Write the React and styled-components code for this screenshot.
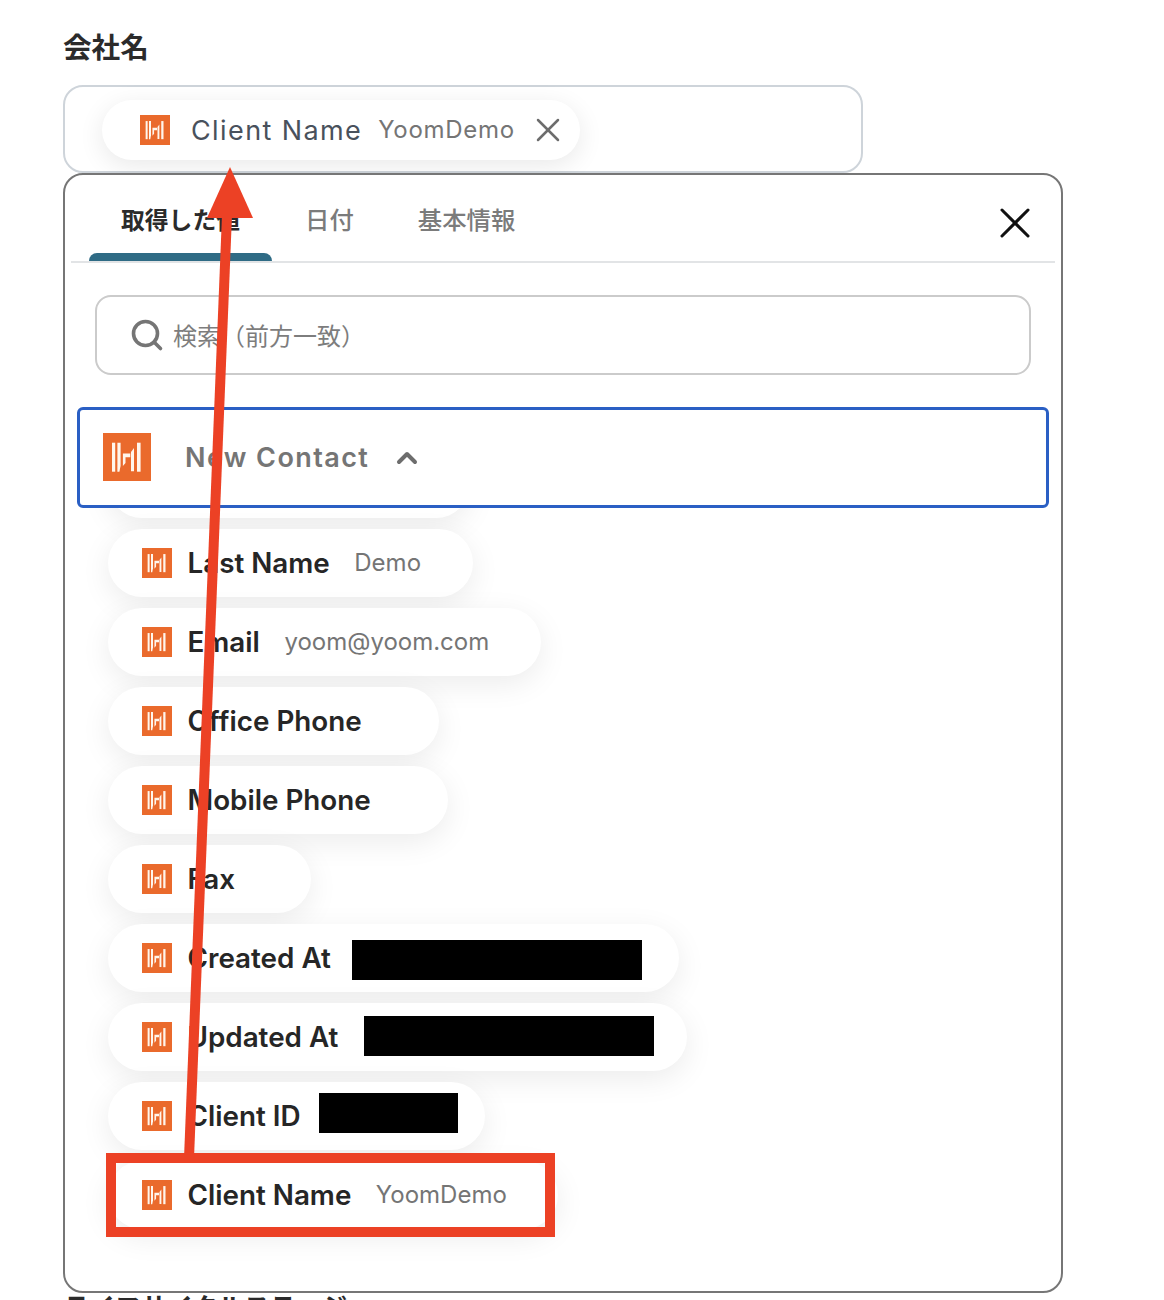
import React from "react";
import styled, { createGlobalStyle } from "styled-components";
import { ChevronUp, Search, X } from "lucide-react";

const Global = createGlobalStyle`
  html, body { margin: 0; padding: 0; height: 1300px; overflow: hidden; background: #fff; }
  * { box-sizing: border-box; }
  body { font-family: Inter, "Noto Sans CJK JP", sans-serif; color: #2b2b2b; }
`;

const Page = styled.div`
  position: relative;
  width: 1164px;
  height: 1300px;
  overflow: hidden;
  padding: 29px 0 0 63px;
`;
const FieldLabel = styled.div`
  font-family: Inter, "Noto Sans CJK JP", sans-serif;
  font-size: 28.6px;
  line-height: 38px;
  font-weight: 600;
  color: #2b2b2b;
`;
const ValueField = styled.div`
  width: 800px;
  height: 88px;
  margin-top: 18px;
  border: 2px solid #ced4da;
  border-radius: 20px;
  padding: 13px 0 0 37px;
`;
const SelectedPill = styled.div`
  display: flex;
  align-items: center;
  width: 478px;
  height: 60px;
  padding-left: 38px;
  border-radius: 30px;
  background: #fff;
  box-shadow: 0 6px 26px rgba(0, 0, 0, 0.09);
`;
const SelectedName = styled.span`
  margin-left: 21px;
  font-size: 27px;
  letter-spacing: 1.4px;
  color: #49515c;
`;
const SelectedValue = styled.span`
  margin: 0 0 2px 16px;
  font-size: 24px;
  letter-spacing: 0.7px;
  color: #757575;
`;
const RemoveIcon = styled(X)`
  flex: none;
  margin: 0 0 0 13px;
  color: #6d6d6d;
`;
const Panel = styled.div`
  width: 1000px;
  height: 1120px;
  border: 2px solid #767676;
  border-radius: 20px;
  background: #fff;
`;
const TabBar = styled.div`
  display: flex;
  align-items: stretch;
  height: 88px;
  margin: 0 6px 0 6px;
  padding: 0 14px 0 18px;
  border-bottom: 2px solid #e2e4e6;
`;
const Tab = styled.div`
  position: relative;
  display: flex;
  align-items: center;
  justify-content: center;
  flex: none;
  width: ${(p) => (p.$active ? "183px" : "auto")};
  height: 88px;
  margin-right: 2px;
  padding: 0 ${(p) => (p.$active ? 0 : 31)}px 2px;
  font-size: ${(p) => (p.$active ? 23.8 : 24.4)}px;
  font-weight: ${(p) => (p.$active ? 600 : 500)};
  color: ${(p) => (p.$active ? "#2b2b2b" : "#7b7b7b")};
  &::after {
    content: "";
    display: ${(p) => (p.$active ? "block" : "none")};
    position: absolute;
    left: 0;
    right: 0;
    bottom: 2px;
    height: 8px;
    background: #2f6b85;
    border-radius: 8px 8px 0 0;
  }
`;
const CloseIcon = styled(X)`
  flex: none;
  margin: 22px 0 0 auto;
  color: #111;
`;
const SearchBox = styled.div`
  display: flex;
  align-items: center;
  height: 80px;
  margin: 32px 30px 0;
  padding: 0 0 2px 32px;
  border: 2px solid #cbcbcb;
  border-radius: 16px;
  font-size: 24px;
  color: #7d7d7d;
  font-weight: 400;
`;
const SearchGlyph = styled(Search)`
  margin: 2px 8px 0 0;
  color: #757575;
`;
const GroupHeader = styled.div`
  position: relative;
  z-index: 1;
  display: flex;
  align-items: center;
  height: 101px;
  margin: 32px 12px 0;
  padding: 0 0 1px 23px;
  border: 3px solid #2a5fc4;
  border-radius: 6px;
  background: #fff;
`;
const GroupTitle = styled.span`
  margin-left: 34px;
  font-size: 27px;
  font-weight: 600;
  letter-spacing: 1.4px;
  color: #757575;
`;
const GroupChevron = styled(ChevronUp)`
  margin: 2px 0 0 22px;
  color: #6d6d6d;
`;
const List = styled.div`
  display: flex;
  flex-direction: column;
  gap: 11px;
  margin: -58px 0 0 43px;
`;
const Pill = styled.div`
  display: flex;
  align-items: center;
  flex: none;
  width: ${(p) => p.$w}px;
  height: 68px;
  padding-left: 34px;
  border-radius: 34px;
  background: #fff;
  box-shadow: 0 8px 30px rgba(0, 0, 0, 0.08);
`;
const PillName = styled.span`
  margin-left: 15.5px;
  font-size: 27.8px;
  font-weight: 600;
  color: #262626;
  white-space: nowrap;
`;
const PillValue = styled.span`
  margin: 0 0 2px 24.5px;
  font-size: 24px;
  color: #757575;
  white-space: nowrap;
`;
const Redaction = styled.div`
  flex: none;
  width: ${(p) => p.$w}px;
  height: 40px;
  margin-left: ${(p) => p.$gap}px;
  background: #000;
  transform: translateY(${(p) => p.$y}px);
`;
const NextLabel = styled(FieldLabel)`
  margin: -4px 0 0;
  font-size: 26px;
`;
const Annotation = styled.svg`
  position: absolute;
  inset: 0;
  z-index: 5;
  pointer-events: none;
`;

const Logo = ({ size }) => (
  <svg width={size} height={size} viewBox="0 0 48 48" style={{ flex: "none" }}>
    <rect width="48" height="48" fill="#ea6a2c" />
    <g fill="#fff6ec">
      <path d="M9 9.7h3.2v29H9z" />
      <path d="M14.4 9.7h3.2v23l-1.2 6h-2z" />
      <path d="M19.9 20.4h7.4v3.9h-4.8V30l-2.6 3z" />
      <path d="M28 38.2V19l3-4v23.2z" />
      <path d="M34 9.7h3.6v29H34z" />
    </g>
  </svg>
);

const rows = [
  { w: 365, name: "Last Name", value: "Demo" },
  { w: 433, name: "Email", value: "yoom@yoom.com" },
  { w: 331, name: "Office Phone" },
  { w: 340, name: "Mobile Phone" },
  { w: 203, name: "Fax" },
  { w: 571, name: "Created At", block: 290, y: 2, gap: 21.5 },
  { w: 579, name: "Updated At", block: 290, y: -1, gap: 25.5 },
  { w: 377, name: "Client ID", block: 139, y: -3, gap: 18.5 },
  { w: 450, name: "Client Name", value: "YoomDemo" },
];

export default function App() {
  return (
    <Page>
      <Global />
      <FieldLabel>会社名</FieldLabel>
      <ValueField>
        <SelectedPill>
          <Logo size={30} />
          <SelectedName>Client Name</SelectedName>
          <SelectedValue>YoomDemo</SelectedValue>
          <RemoveIcon size={40} strokeWidth={1.5} />
        </SelectedPill>
      </ValueField>
      <Panel>
        <TabBar>
          <Tab $active>取得した値</Tab>
          <Tab>日付</Tab>
          <Tab>基本情報</Tab>
          <CloseIcon size={52} strokeWidth={1.4} />
        </TabBar>
        <SearchBox>
          <SearchGlyph size={36} strokeWidth={2.4} />
          検索（前方一致）
        </SearchBox>
        <GroupHeader>
          <Logo size={48} />
          <GroupTitle>New Contact</GroupTitle>
          <GroupChevron size={32} strokeWidth={3} />
        </GroupHeader>
        <List>
          <Pill $w={362} />
          {rows.map((r) => (
            <Pill key={r.name} $w={r.w}>
              <Logo size={30} />
              <PillName>{r.name}</PillName>
              {r.value && <PillValue>{r.value}</PillValue>}
              {r.block && <Redaction $w={r.block} $y={r.y} $gap={r.gap} />}
            </Pill>
          ))}
        </List>
      </Panel>
      <NextLabel>ライフサイクルステージ</NextLabel>
      <Annotation width="1164" height="1300" viewBox="0 0 1164 1300">
        <rect x="111" y="1158" width="439" height="74" fill="none" stroke="#ec4125" strokeWidth="10" />
        <path d="M184 1158 L222 215 L232 215 L194 1158 Z" fill="#ec4125" />
        <path d="M230 167 L253 218 L207 218 Z" fill="#ec4125" />
      </Annotation>
    </Page>
  );
}
